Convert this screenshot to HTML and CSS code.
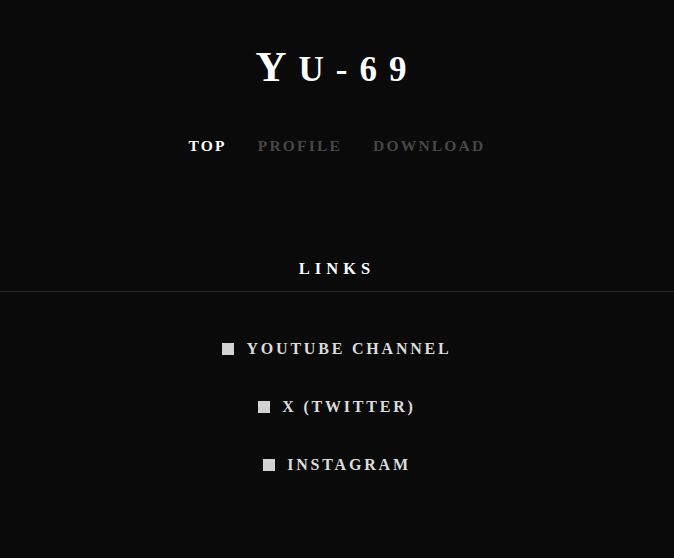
FILE: index.html
```html
<!DOCTYPE html>
<html>
<head>
<meta charset="utf-8">
<link rel="stylesheet" href="styles.css">
</head>
<body>
<header class="header">
  <h1 class="title"><span class="title-cap">Y</span>u-69</h1>
  <nav class="nav">
    <a class="nav-item active">TOP</a>
    <a class="nav-item">PROFILE</a>
    <a class="nav-item">DOWNLOAD</a>
  </nav>
</header>
<section class="links">
  <h2 class="links-title">LINKS</h2>
  <ul class="link-list">
    <li class="link-item"><span class="square"></span>YOUTUBE CHANNEL</li>
    <li class="link-item"><span class="square"></span>X (TWITTER)</li>
    <li class="link-item"><span class="square"></span>INSTAGRAM</li>
  </ul>
</section>
</body>
</html>
```
FILE: styles.css
```css
html, body {
  margin: 0;
  padding: 0;
  background: #0a0a0a;
  height: 100%;
}
body {
  font-family: "Liberation Serif", "DejaVu Serif", serif;
  color: #fff;
}
.header {
  display: flex;
  flex-direction: column;
  align-items: center;
  padding-top: 42px;
}
.title {
  margin: 0;
  font-size: 35px;
  line-height: 50px;
  font-weight: bold;
  text-transform: uppercase;
  letter-spacing: 12px;
  color: #fff;
}
.title-cap {
  font-size: 43px;
}
.nav {
  display: flex;
  gap: 31px;
  margin-top: 41px;
}
.nav-item {
  font-size: 15.5px;
  line-height: 20px;
  font-weight: bold;
  letter-spacing: 2.2px;
  color: #474747;
}
.nav-item.active {
  color: #fff;
}
.links {
  margin-top: 103px;
}
.links-title {
  margin: 0;
  text-align: center;
  font-size: 16.5px;
  line-height: 20px;
  font-weight: bold;
  letter-spacing: 5px;
  padding-bottom: 12px;
  border-bottom: 1px solid #262626;
  color: #fff;
}
.link-list {
  list-style: none;
  margin: 0;
  padding: 0;
  padding-top: 47px;
  display: flex;
  flex-direction: column;
  align-items: center;
  gap: 38px;
}
.link-item {
  display: flex;
  align-items: center;
  gap: 12px;
  font-size: 16px;
  line-height: 20px;
  font-weight: bold;
  letter-spacing: 2.8px;
  color: #dcdcdc;
}
.square {
  width: 12px;
  height: 12px;
  background: #d2d2d2;
}
```
